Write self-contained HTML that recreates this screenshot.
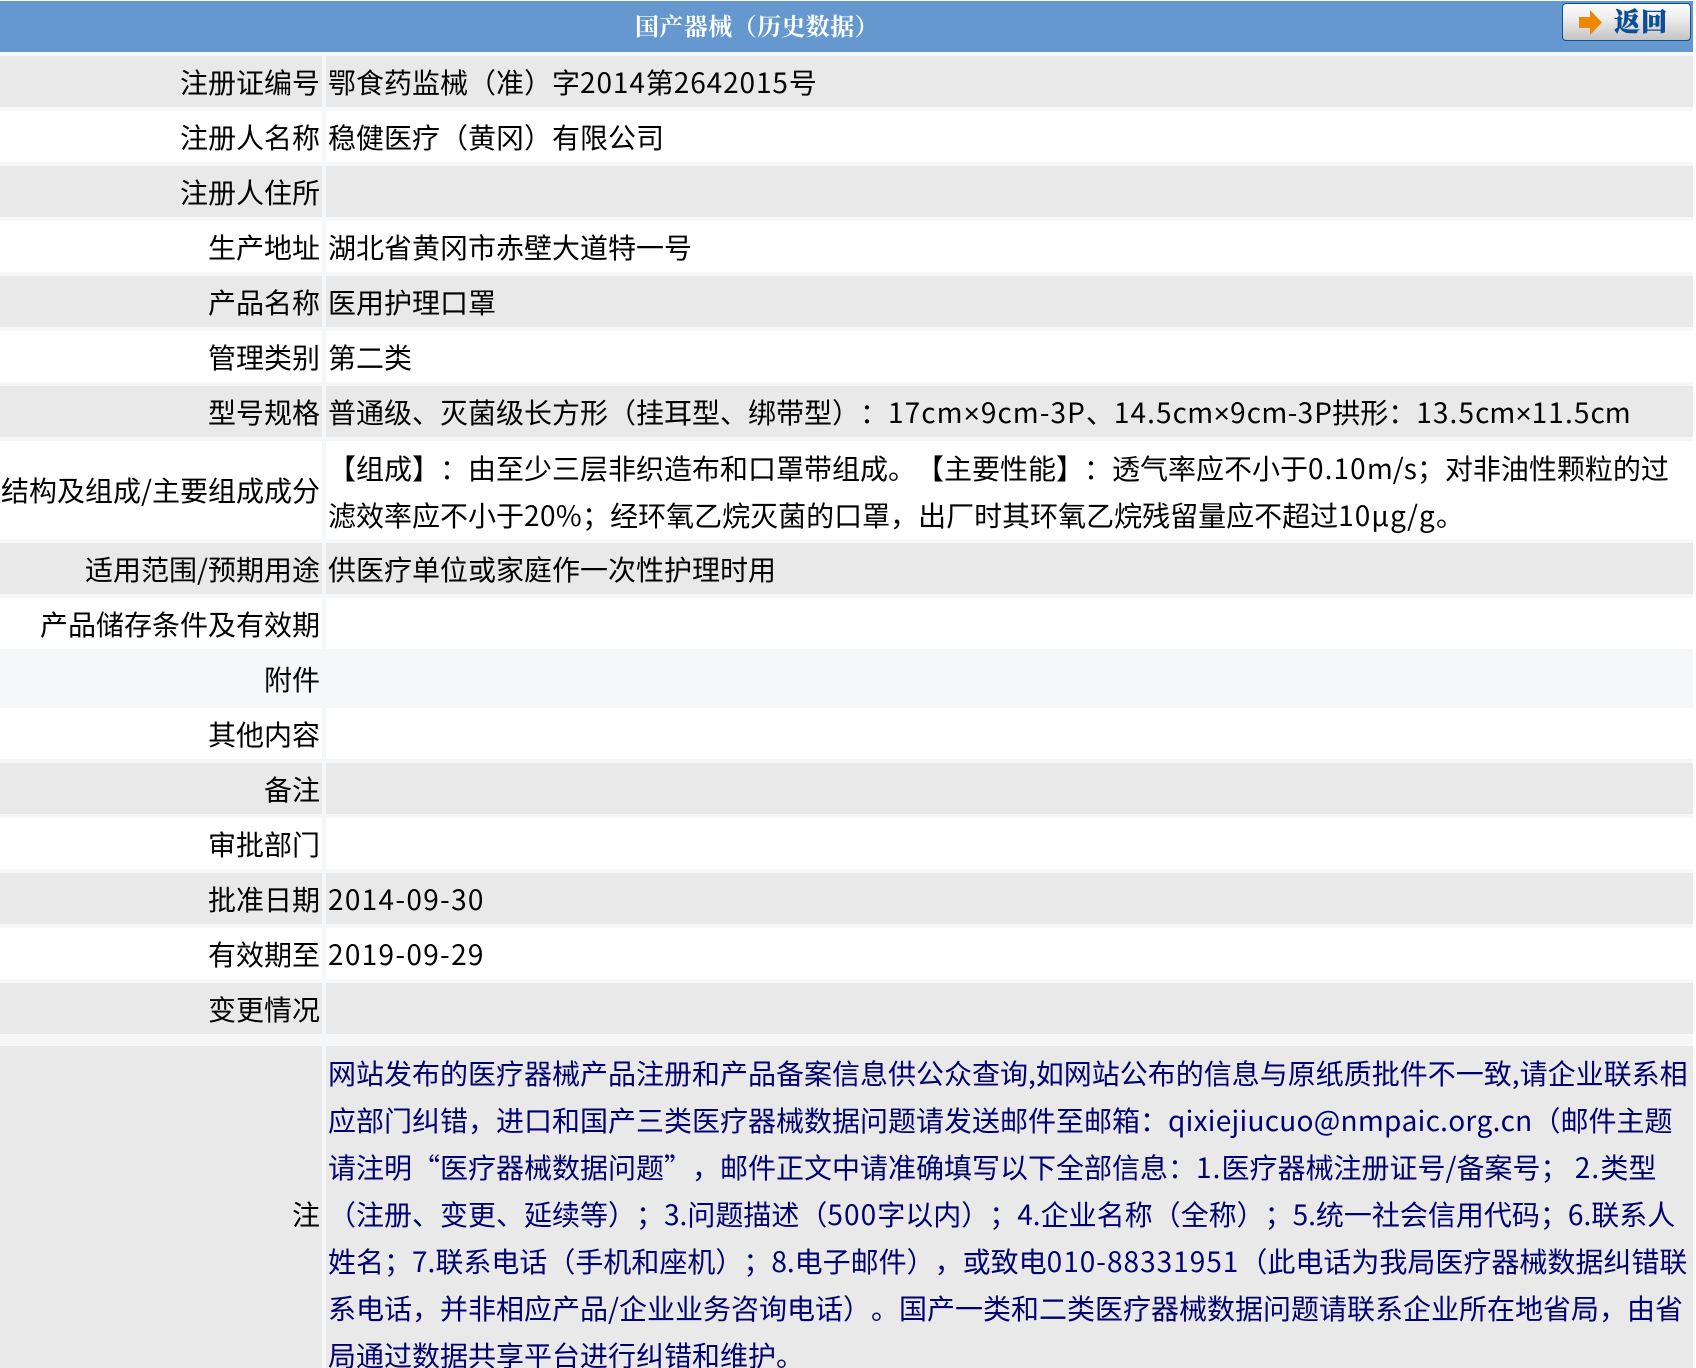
<!DOCTYPE html>
<html lang="zh-CN"><head><meta charset="utf-8"><title>国产器械（历史数据）</title>
<style>
html,body{margin:0;padding:0;background:#fff;width:1696px;height:1368px;overflow:hidden}
body{position:relative;font-family:"Noto Sans CJK SC","Liberation Sans",sans-serif;font-size:28px;color:#000;text-spacing-trim:space-all;font-kerning:none}
#bg{position:absolute;left:0;top:52px;width:1693px;height:1316px;background:#f6f7f9}
#hd{position:absolute;left:0;top:1px;width:1693px;height:51px;background:#6498cf}
#ti{position:absolute;left:635px;top:8px;font:bold 24px/34px "Noto Serif CJK SC",serif;letter-spacing:.4px;color:#fff;white-space:nowrap}
#bt{position:absolute;left:1562px;top:3px;width:127px;height:36px;border:1.5px solid #0a5499;border-radius:4px;background:linear-gradient(#fbfbfb,#f0f0f0 35%,#c4c4c4)}
#bt span{position:absolute;left:51px;top:0;font:900 26px/34px "Noto Serif CJK SC",serif;color:#0b4f96;letter-spacing:1px;white-space:nowrap;-webkit-text-stroke:.5px #0b4f96}
#bt svg{position:absolute;left:16px;top:6px}
.l,.v{position:absolute;height:51px;line-height:53px;white-space:nowrap}
.l{left:0;width:322px;text-align:right;box-sizing:border-box;padding-right:2px}
.v{left:326px;width:1367px;box-sizing:border-box;padding-left:2px}
.g{background:#e9e9e9}.w{background:#fff}.n{background:transparent}
.ln{position:absolute;left:328px;white-space:nowrap;line-height:47px;height:47px}
.nv{color:#000070}
i{font-style:normal;letter-spacing:1.1px}
.e{letter-spacing:.26px}
.x{font-family:"Liberation Sans",sans-serif;letter-spacing:0}
.s1{letter-spacing:1px}
.s2{letter-spacing:.3px}
.s1 .x{letter-spacing:1px}
.s2 .x{letter-spacing:.3px}
</style></head><body>
<div id="bg"></div>
<div id="hd"></div>
<div id="ti">国产器械（历史数据）</div>
<div id="bt"><svg width="24" height="25" viewBox="0 0 24 25"><path d="M0 7H11V0L23 12.5 11 25V18H0Z" fill="#ee8800"/></svg><span>返回</span></div>

<div class="l g" style="top:56px">注册证编号</div><div class="v g" style="top:56px">鄂食药监械（准）字<i style="letter-spacing:.9px">2014</i>第<i style="letter-spacing:.9px">2642015</i>号</div>
<div class="l w" style="top:111px">注册人名称</div><div class="v w" style="top:111px">稳健医疗（黄冈）有限公司</div>
<div class="l g" style="top:166px">注册人住所</div><div class="v g" style="top:166px"></div>
<div class="l w" style="top:221px">生产地址</div><div class="v w" style="top:221px">湖北省黄冈市赤壁大道特一号</div>
<div class="l g" style="top:276px">产品名称</div><div class="v g" style="top:276px">医用护理口罩</div>
<div class="l w" style="top:331px">管理类别</div><div class="v w" style="top:331px">第二类</div>
<div class="l g" style="top:386px">型号规格</div><div class="v g" style="top:386px">普通级、灭菌级长方形（挂耳型、绑带型）：<span class="s1"><i>17</i>cm<span class="x">×</span><i>9</i>cm-<i>3</i>P</span>、<span class="s2"><i>14.5</i>cm<span class="x">×</span><i>9</i>cm-<i>3</i>P</span>拱形：<i>13.5</i>cm<span class="x">×</span><i>11.5</i>cm</div>
<div class="l w" style="top:441px;height:98px;line-height:98px">结构及组成/主要组成成分</div><div class="v w" style="top:441px;height:98px"></div>
<div class="ln" style="top:445px">【组成】：由至少三层非织造布和口罩带组成。【主要性能】：透气率应不小于<i>0.10</i>m/s；对非油性颗粒的过</div>
<div class="ln" style="top:492px">滤效率应不小于<i style="letter-spacing:.4px">20%</i>；经环氧乙烷灭菌的口罩，出厂时其环氧乙烷残留量应不超过<i>10</i><i>μg/g</i>。</div>
<div class="l g" style="top:543px">适用范围/预期用途</div><div class="v g" style="top:543px">供医疗单位或家庭作一次性护理时用</div>
<div class="l w" style="top:598px">产品储存条件及有效期</div><div class="v w" style="top:598px"></div>
<div class="l n" style="top:653px">附件</div>
<div class="l w" style="top:708px">其他内容</div><div class="v w" style="top:708px"></div>
<div class="l g" style="top:763px">备注</div><div class="v g" style="top:763px"></div>
<div class="l w" style="top:818px">审批部门</div><div class="v w" style="top:818px"></div>
<div class="l g" style="top:873px">批准日期</div><div class="v g" style="top:873px"><i style="letter-spacing:1.3px">2014-09-30</i></div>
<div class="l w" style="top:928px">有效期至</div><div class="v w" style="top:928px"><i style="letter-spacing:1.3px">2019-09-29</i></div>
<div class="l g" style="top:983px">变更情况</div><div class="v g" style="top:983px"></div>
<div class="l g" style="top:1046px;height:322px;line-height:336px">注</div><div class="v g" style="top:1046px;height:322px"></div>
<div class="ln nv" style="top:1050px">网站发布的医疗器械产品注册和产品备案信息供公众查询,如网站公布的信息与原纸质批件不一致,请企业联系相</div>
<div class="ln nv" style="top:1097px">应部门纠错，进口和国产三类医疗器械数据问题请发送邮件至邮箱：<span class="e">qixiejiucuo@nmpaic.org.cn</span>（邮件主题</div>
<div class="ln nv" style="top:1144px">请注明“医疗器械数据问题”，邮件正文中请准确填写以下全部信息：<i>1.</i>医疗器械注册证号/备案号； <i>2.</i>类型</div>
<div class="ln nv" style="top:1191px">（注册、变更、延续等）；3.问题描述（<i>500</i>字以内）；4.企业名称（全称）；5.统一社会信用代码；6.联系人</div>
<div class="ln nv" style="top:1238px">姓名；7.联系电话（手机和座机）；8.电子邮件），或致电<i style="letter-spacing:1px">010-88331951</i>（此电话为我局医疗器械数据纠错联</div>
<div class="ln nv" style="top:1285px">系电话，并非相应产品/企业业务咨询电话）。国产一类和二类医疗器械数据问题请联系企业所在地省局，由省</div>
<div class="ln nv" style="top:1332px">局通过数据共享平台进行纠错和维护。</div>
</body></html>
